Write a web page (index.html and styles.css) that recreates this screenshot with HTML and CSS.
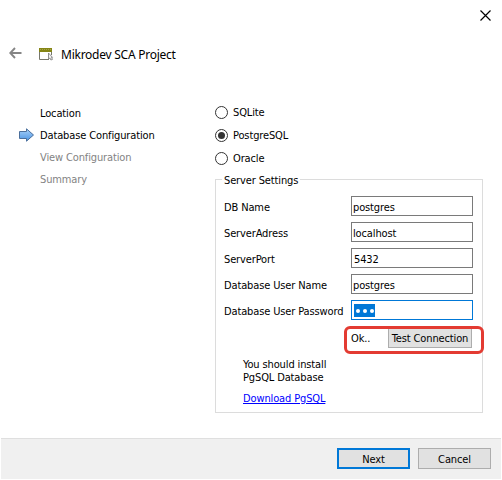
FILE: index.html
```
<!DOCTYPE html>
<html lang="en">
<head>
<meta charset="utf-8">
<title>Mikrodev SCA Project</title>
<link rel="stylesheet" href="styles.css">
</head>
<body>
<div class="window">
  <div class="titlebar">
    <svg class="close" width="11" height="11" viewBox="0 0 11 11"><path d="M.5.5l10 10M10.5.5l-10 10" fill="none" stroke="#000" stroke-width="1.2"/></svg>
  </div>
  <header class="header">
    <svg class="back" width="13" height="12" viewBox="0 0 13 12"><path d="M6 1L1.2 6L6 11M1.5 6H12.5" fill="none" stroke="#858585" stroke-width="1.9"/></svg>
    <svg class="app-icon" width="15" height="13" viewBox="0 0 15 13"><path d="M.5 1v10.500h9.500M12.500 1v6" fill="none" stroke="#77776c"/><path d="M0 0h13v4H0z" fill="#858515"/><path d="M1 1.500h11" stroke="#a5a548" stroke-dasharray="1 1"/><path d="M9.500 5v6l1.400-1 1 2 1.600-.6-1-2h1z" fill="#eee" stroke="#777" stroke-width=".8"/></svg>
    <h1>Mikrodev SCA Project</h1>
  </header>
  <main class="content">
    <ol class="steps">
      <li>Location</li>
      <li class="current"><svg class="arrow" width="17" height="15" viewBox="0 0 17 15"><defs><linearGradient id="blue" x2="0" y2="1"><stop stop-color="#a9d2fa"/><stop offset="1" stop-color="#4a93e2"/></linearGradient></defs><path d="M1.500 3.500h7V.8l7 6.200-7 6.200v-2.700h-7z" fill="url(#blue)" stroke="#4b6f9c"/></svg><span>Database Configuration</span></li>
      <li class="pending">View Configuration</li>
      <li class="pending">Summary</li>
    </ol>
    <form class="form">
      <div class="radios">
        <label><i class="radio"></i>SQLite</label>
        <label><i class="radio checked"></i>PostgreSQL</label>
        <label><i class="radio"></i>Oracle</label>
      </div>
      <section class="group">
        <h2>Server Settings</h2>
        <div class="fields">
          <span>DB Name</span><div class="field">postgres</div>
          <span>ServerAdress</span><div class="field">localhost</div>
          <span>ServerPort</span><div class="field port">5432</div>
          <span>Database User Name</span><div class="field">postgres</div>
          <span>Database User Password</span><div class="field focus"><span class="selection"><i></i><i></i><i></i></span></div>
        </div>
        <div class="test"><span>Ok..</span><div class="button small">Test Connection</div></div>
        <p class="note">You should install<br>PgSQL Database</p>
        <a class="link">Download PgSQL</a>
      </section>
    </form>
  </main>
  <footer class="footer">
    <div class="button primary">Next</div>
    <div class="button">Cancel</div>
  </footer>
</div>
</body>
</html>
```
FILE: styles.css
```
* { box-sizing: border-box; }
body { margin: 0; background: #fff; color: #000; font: 11px/14px "DejaVu Sans Condensed", "DejaVu Sans", sans-serif; letter-spacing: -0.13px; white-space: nowrap; }
.window { width: 502px; height: 480px; padding: 0 1px 1px; display: flex; flex-direction: column; overflow: hidden; }
.titlebar { height: 42px; display: flex; justify-content: flex-end; padding: 10px 10px 0 0; }
.header { height: 63px; display: flex; align-items: flex-start; padding-left: 8px; }
.back { margin-top: 5px; }
.app-icon { margin: 6px 0 0 17px; }
h1 { margin: 4px 0 0 7px; font: 12px/18px "Noto Sans", sans-serif; letter-spacing: -0.25px; }
.content { height: 333px; display: flex; }
.steps { width: 214px; margin: 0; padding: 2px 0 0 39px; list-style: none; }
.steps li { height: 22px; position: relative; }
.arrow { position: absolute; left: -22px; top: -1px; }
.pending { color: #838383; }
.form { width: 268px; }
.radios { height: 74px; padding-top: 1px; }
.radios label { display: flex; align-items: flex-start; height: 23px; gap: 5px; }
.radio { width: 13px; height: 13px; border: 1px solid #333; border-radius: 50%; display: grid; place-items: center; }
.checked::after { content: ""; width: 7px; height: 7px; border-radius: 50%; background: #333; }
.group { height: 234px; border: 1px solid #dcdcdc; padding: 0 8px; }
h2 { width: max-content; margin: -7px 0 0 -2px; padding: 0 2px; background: #fff; font: inherit; line-height: 16px; }
.fields { margin-top: 7px; display: grid; grid-template-columns: 127px 122px; grid-auto-rows: 20px; row-gap: 6px; line-height: 24px; }
.field { border: 1px solid #7a7a7a; padding-left: 1px; line-height: 22px; }
.field.port { padding-left: 2px; }
.field.focus { border-color: #0078d7; padding: 3px 0 0 2px; }
.selection { display: flex; align-items: center; justify-content: center; gap: 3px; width: 21px; height: 13px; background: #0078d7; }
.selection i { width: 4px; height: 4px; background: #fff; border-radius: 50%; }
.test { width: 140px; height: 28px; margin: 6px 0 0 120px; border: 3px solid #e33b32; border-radius: 6px; display: flex; justify-content: space-between; padding: 0 9px 0 4px; line-height: 19px; }
.button { width: 73px; height: 21px; border: 1px solid #adadad; background: #e1e1e1; text-align: center; line-height: 22px; }
.button.small { width: 84px; height: 19px; border-top: 0; line-height: 19px; }
.button.primary { border: 2px solid #0078d7; line-height: 20px; }
.note { margin: 4px 0 0 19px; line-height: 13px; }
.link { display: block; margin: 8px 0 0 19px; color: #00f; text-decoration: underline; }
.footer { height: 41px; border-top: 1px solid #dfdfdf; background: #f0f0f0; display: flex; justify-content: flex-end; gap: 8px; padding: 9px 10px 0 0; }
```
